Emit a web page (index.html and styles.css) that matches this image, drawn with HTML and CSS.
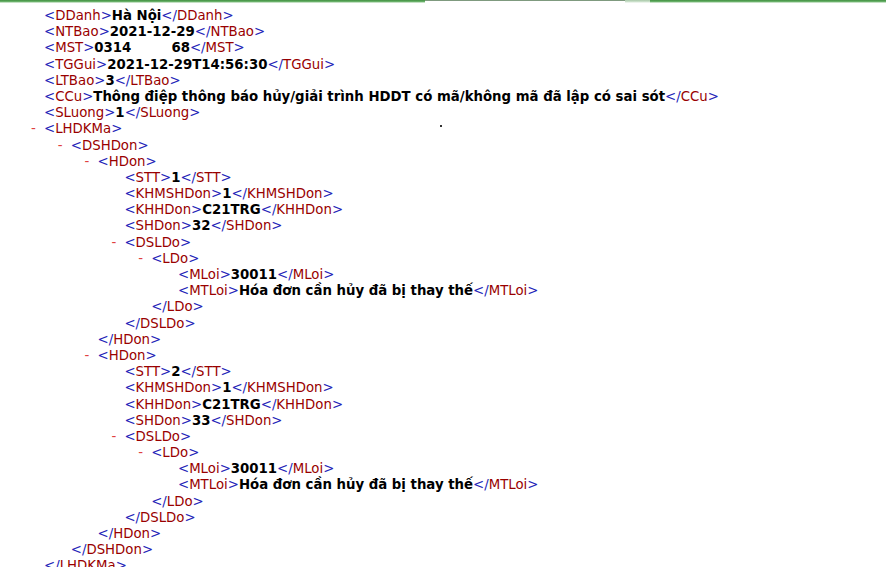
FILE: index.html
```html
<!DOCTYPE html>
<html>
<head>
<meta charset="utf-8">
<link rel="stylesheet" href="styles.css">
</head>
<body>
<div class="topbar"><div class="seg-a"></div><div class="seg-b"></div><div class="seg-c"></div><div class="seg-d"></div></div>
<div class="doc">
  <div class="ln"><span class="b">&lt;</span><span class="t">DDanh</span><span class="b">&gt;</span><span class="x">Hà Nội</span><span class="b">&lt;/</span><span class="t">DDanh</span><span class="b">&gt;</span></div>
  <div class="ln"><span class="b">&lt;</span><span class="t">NTBao</span><span class="b">&gt;</span><span class="x">2021-12-29</span><span class="b">&lt;/</span><span class="t">NTBao</span><span class="b">&gt;</span></div>
  <div class="ln"><span class="b">&lt;</span><span class="t">MST</span><span class="b">&gt;</span><span class="x">0314<span class="gap"></span>68</span><span class="b">&lt;/</span><span class="t">MST</span><span class="b">&gt;</span></div>
  <div class="ln"><span class="b">&lt;</span><span class="t">TGGui</span><span class="b">&gt;</span><span class="x">2021-12-29T14:56:30</span><span class="b">&lt;/</span><span class="t">TGGui</span><span class="b">&gt;</span></div>
  <div class="ln"><span class="b">&lt;</span><span class="t">LTBao</span><span class="b">&gt;</span><span class="x">3</span><span class="b">&lt;/</span><span class="t">LTBao</span><span class="b">&gt;</span></div>
  <div class="ln"><span class="b">&lt;</span><span class="t">CCu</span><span class="b">&gt;</span><span class="x">Thông điệp thông báo hủy/giải trình HDDT có mã/không mã đã lập có sai sót</span><span class="b">&lt;/</span><span class="t">CCu</span><span class="b">&gt;</span></div>
  <div class="ln"><span class="b">&lt;</span><span class="t">SLuong</span><span class="b">&gt;</span><span class="x">1</span><span class="b">&lt;/</span><span class="t">SLuong</span><span class="b">&gt;</span></div>
  <div class="ln"><span class="m">-</span><span class="b">&lt;</span><span class="t">LHDKMa</span><span class="b">&gt;</span><span class="dot"></span></div>
  <div class="kids">
    <div class="ln"><span class="m">-</span><span class="b">&lt;</span><span class="t">DSHDon</span><span class="b">&gt;</span></div>
    <div class="kids">
      <div class="ln"><span class="m">-</span><span class="b">&lt;</span><span class="t">HDon</span><span class="b">&gt;</span></div>
      <div class="kids">
        <div class="ln"><span class="b">&lt;</span><span class="t">STT</span><span class="b">&gt;</span><span class="x">1</span><span class="b">&lt;/</span><span class="t">STT</span><span class="b">&gt;</span></div>
        <div class="ln"><span class="b">&lt;</span><span class="t">KHMSHDon</span><span class="b">&gt;</span><span class="x">1</span><span class="b">&lt;/</span><span class="t">KHMSHDon</span><span class="b">&gt;</span></div>
        <div class="ln"><span class="b">&lt;</span><span class="t">KHHDon</span><span class="b">&gt;</span><span class="x">C21TRG</span><span class="b">&lt;/</span><span class="t">KHHDon</span><span class="b">&gt;</span></div>
        <div class="ln"><span class="b">&lt;</span><span class="t">SHDon</span><span class="b">&gt;</span><span class="x">32</span><span class="b">&lt;/</span><span class="t">SHDon</span><span class="b">&gt;</span></div>
        <div class="ln"><span class="m">-</span><span class="b">&lt;</span><span class="t">DSLDo</span><span class="b">&gt;</span></div>
        <div class="kids">
          <div class="ln"><span class="m">-</span><span class="b">&lt;</span><span class="t">LDo</span><span class="b">&gt;</span></div>
          <div class="kids">
            <div class="ln"><span class="b">&lt;</span><span class="t">MLoi</span><span class="b">&gt;</span><span class="x">30011</span><span class="b">&lt;/</span><span class="t">MLoi</span><span class="b">&gt;</span></div>
            <div class="ln"><span class="b">&lt;</span><span class="t">MTLoi</span><span class="b">&gt;</span><span class="x">Hóa đơn cần hủy đã bị thay thế</span><span class="b">&lt;/</span><span class="t">MTLoi</span><span class="b">&gt;</span></div>
          </div>
          <div class="ln"><span class="b">&lt;/</span><span class="t">LDo</span><span class="b">&gt;</span></div>
        </div>
        <div class="ln"><span class="b">&lt;/</span><span class="t">DSLDo</span><span class="b">&gt;</span></div>
      </div>
      <div class="ln"><span class="b">&lt;/</span><span class="t">HDon</span><span class="b">&gt;</span></div>
      <div class="ln"><span class="m">-</span><span class="b">&lt;</span><span class="t">HDon</span><span class="b">&gt;</span></div>
      <div class="kids">
        <div class="ln"><span class="b">&lt;</span><span class="t">STT</span><span class="b">&gt;</span><span class="x">2</span><span class="b">&lt;/</span><span class="t">STT</span><span class="b">&gt;</span></div>
        <div class="ln"><span class="b">&lt;</span><span class="t">KHMSHDon</span><span class="b">&gt;</span><span class="x">1</span><span class="b">&lt;/</span><span class="t">KHMSHDon</span><span class="b">&gt;</span></div>
        <div class="ln"><span class="b">&lt;</span><span class="t">KHHDon</span><span class="b">&gt;</span><span class="x">C21TRG</span><span class="b">&lt;/</span><span class="t">KHHDon</span><span class="b">&gt;</span></div>
        <div class="ln"><span class="b">&lt;</span><span class="t">SHDon</span><span class="b">&gt;</span><span class="x">33</span><span class="b">&lt;/</span><span class="t">SHDon</span><span class="b">&gt;</span></div>
        <div class="ln"><span class="m">-</span><span class="b">&lt;</span><span class="t">DSLDo</span><span class="b">&gt;</span></div>
        <div class="kids">
          <div class="ln"><span class="m">-</span><span class="b">&lt;</span><span class="t">LDo</span><span class="b">&gt;</span></div>
          <div class="kids">
            <div class="ln"><span class="b">&lt;</span><span class="t">MLoi</span><span class="b">&gt;</span><span class="x">30011</span><span class="b">&lt;/</span><span class="t">MLoi</span><span class="b">&gt;</span></div>
            <div class="ln"><span class="b">&lt;</span><span class="t">MTLoi</span><span class="b">&gt;</span><span class="x">Hóa đơn cần hủy đã bị thay thế</span><span class="b">&lt;/</span><span class="t">MTLoi</span><span class="b">&gt;</span></div>
          </div>
          <div class="ln"><span class="b">&lt;/</span><span class="t">LDo</span><span class="b">&gt;</span></div>
        </div>
        <div class="ln"><span class="b">&lt;/</span><span class="t">DSLDo</span><span class="b">&gt;</span></div>
      </div>
      <div class="ln"><span class="b">&lt;/</span><span class="t">HDon</span><span class="b">&gt;</span></div>
    </div>
    <div class="ln"><span class="b">&lt;/</span><span class="t">DSHDon</span><span class="b">&gt;</span></div>
  </div>
  <div class="ln"><span class="b">&lt;/</span><span class="t">LHDKMa</span><span class="b">&gt;</span></div>
</div>
</body>
</html>
```
FILE: styles.css
```css
html, body {
  margin: 0;
  padding: 0;
  background: #ffffff;
  overflow: hidden;
}
body {
  font-family: "DejaVu Sans", Verdana, sans-serif;
  font-size: 13.3px;
  line-height: 16.18px;
}
.topbar {
  display: flex;
  height: 3px;
}
.seg-a {
  width: 425px;
  background: linear-gradient(#3f8f3f, #6fb56f 60%, #ffffff);
}
.seg-b {
  width: 200px;
  background: linear-gradient(#7f9a7f 0, #7f9a7f 34%, #ffffff 34%);
}
.seg-c {
  width: 25px;
  background: linear-gradient(#a8c8a8, #cfe3cf 60%, #ffffff);
}
.seg-d {
  flex: 1;
  background: linear-gradient(#3f8f3f, #6fb56f 60%, #ffffff);
}
.doc {
  padding: 5px 0 0 44px;
}
.ln {
  white-space: nowrap;
  position: relative;
}
.kids {
  margin-left: 26.8px;
}
.m {
  display: inline-block;
  width: 13px;
  margin-left: -13px;
  color: #e04040;
}
.b {
  color: #2424b8;
}
.t {
  color: #990000;
}
.x {
  color: #000000;
  font-weight: bold;
}
.gap {
  display: inline-block;
  width: 40px;
}
.dot {
  position: absolute;
  left: 396px;
  top: 4px;
  width: 2px;
  height: 2px;
  background: #333333;
}
```
